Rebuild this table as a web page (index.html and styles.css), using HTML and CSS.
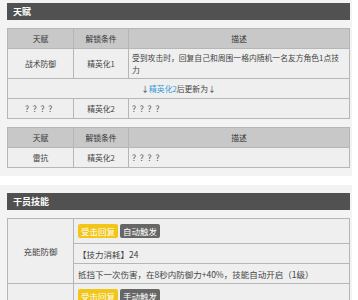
FILE: index.html
```html
<!DOCTYPE html>
<html lang="zh-CN">
<head>
    <meta charset="UTF-8">
    <meta name="viewport" content="width=device-width, initial-scale=1.0">
    <title>干员资料</title>
    <link rel="stylesheet" href="styles.css">
</head>
<body>
    <div class="panel panel-first">
        <div class="bar">天赋</div>
        <table class="info talents">
            <colgroup><col class="c1"><col class="c2"><col></colgroup>
            <tr class="head"><th>天赋</th><th>解锁条件</th><th>描述</th></tr>
            <tr class="tall"><td>战术防御</td><td>精英化1</td><td class="desc">受到攻击时，回复自己和周围一格内随机一名友方角色1点技力</td></tr>
            <tr><td colspan="3">↓<a href="#">精英化2</a>后更新为↓</td></tr>
            <tr><td>？？？？</td><td>精英化2</td><td class="desc">？？？？</td></tr>
        </table>
        <table class="info talents">
            <colgroup><col class="c1"><col class="c2"><col></colgroup>
            <tr class="head"><th>天赋</th><th>解锁条件</th><th>描述</th></tr>
            <tr><td>雷抗</td><td>精英化2</td><td class="desc">？？？？</td></tr>
        </table>
    </div>

    <div class="panel">
        <div class="bar">干员技能</div>
        <table class="info skills">
            <colgroup><col class="c1"><col></colgroup>
            <tr class="tags-row">
                <td rowspan="3">充能防御</td>
                <td class="desc"><span class="tag tag-sp">受击回复</span><span class="tag tag-type">自动触发</span></td>
            </tr>
            <tr><td class="desc">【技力消耗】24</td></tr>
            <tr><td class="desc">抵挡下一次伤害，在8秒内防御力+40%，技能自动开启（1级）</td></tr>
            <tr class="tags-row">
                <td rowspan="3"></td>
                <td class="desc"><span class="tag tag-sp">受击回复</span><span class="tag tag-type">手动触发</span></td>
            </tr>
        </table>
    </div>
</body>
</html>
```

FILE: styles.css
```css
body {
    margin: 0;
    background: #fff;
    font-family: "Noto Sans CJK SC", "Noto Sans", sans-serif;
    font-size: 8.5px;
    color: #444;
}
.panel {
    width: 343px;
    background: #f3f3f3;
    padding: 8px 2px 8px 7px;
    margin-bottom: 9px;
}
.panel-first {
    padding-top: 3px;
}
.bar {
    height: 17px;
    line-height: 17px;
    background: #515151;
    color: #fff;
    font-weight: bold;
    font-size: 9px;
    padding-left: 6px;
    margin-bottom: 8px;
}
.info {
    width: 100%;
    table-layout: fixed;
    border-collapse: collapse;
    background: #efefef;
    margin-bottom: 8px;
}
.info:last-child {
    margin-bottom: 0;
}
.info .c1 {
    width: 66px;
}
.info .c2 {
    width: 55px;
}
.info th,
.info td {
    border: 1px solid #b6b6b6;
    height: 19px;
    padding: 0 3px;
    text-align: center;
    font-weight: normal;
    line-height: 12px;
}
.info th {
    background: #c8c8c8;
    color: #333;
}
.talents {
    font-size: 7.8px;
}
.info .tall td {
    height: 28px;
    padding-top: 1px;
}
.info td.desc {
    text-align: left;
}
.info a {
    color: #3a9ad9;
    text-decoration: none;
}
.skills td.desc {
    padding-left: 4px;
}
.skills .tags-row td {
    height: 24px;
}
.tag {
    display: inline-block;
    padding: 1px 3px;
    border-radius: 2px;
    color: #fff;
    line-height: 12px;
    margin-right: 2px;
}
.tag-sp {
    background: #f2c618;
}
.tag-type {
    background: #666;
}
```
